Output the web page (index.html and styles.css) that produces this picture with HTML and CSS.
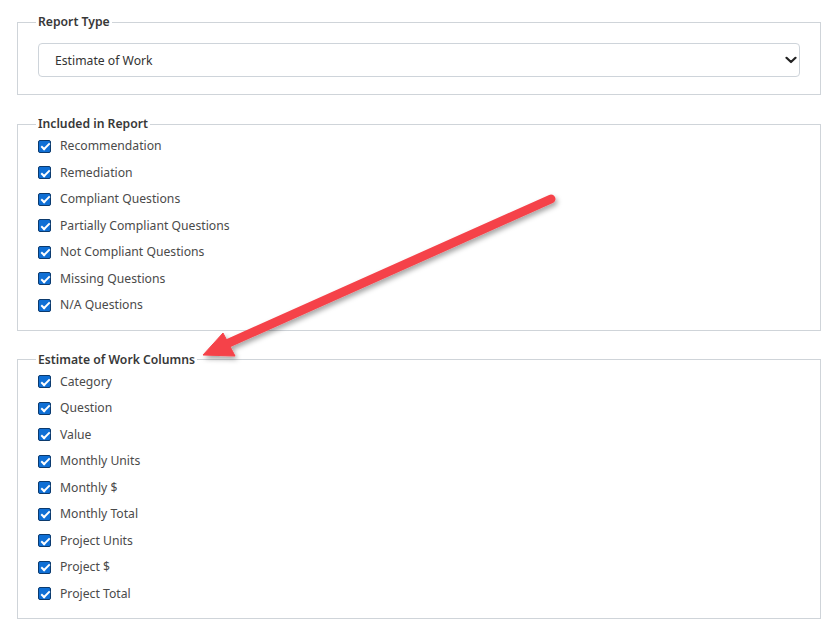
FILE: index.html
```html
<!DOCTYPE html>
<html>
<head>
<meta charset="utf-8">
<link rel="stylesheet" href="styles.css">
</head>
<body>
<div class="page">
  <fieldset class="group group-type">
    <legend>Report Type</legend>
    <div class="select-wrap">
      <select class="select">
        <option>Estimate of Work</option>
      </select>
      <svg class="chev" width="12" height="8" viewBox="0 0 12 8"><path d="M1.5 1.8 L6 6 L10.5 1.8" fill="none" stroke="#222" stroke-width="2.2" stroke-linecap="round" stroke-linejoin="round"/></svg>
    </div>
  </fieldset>

  <fieldset class="group">
    <legend>Included in Report</legend>
    <div class="row"><span class="cb"></span><span class="lbl">Recommendation</span></div>
    <div class="row"><span class="cb"></span><span class="lbl">Remediation</span></div>
    <div class="row"><span class="cb"></span><span class="lbl">Compliant Questions</span></div>
    <div class="row"><span class="cb"></span><span class="lbl">Partially Compliant Questions</span></div>
    <div class="row"><span class="cb"></span><span class="lbl">Not Compliant Questions</span></div>
    <div class="row"><span class="cb"></span><span class="lbl">Missing Questions</span></div>
    <div class="row"><span class="cb"></span><span class="lbl">N/A Questions</span></div>
  </fieldset>

  <fieldset class="group">
    <legend>Estimate of Work Columns</legend>
    <div class="row"><span class="cb"></span><span class="lbl">Category</span></div>
    <div class="row"><span class="cb"></span><span class="lbl">Question</span></div>
    <div class="row"><span class="cb"></span><span class="lbl">Value</span></div>
    <div class="row"><span class="cb"></span><span class="lbl">Monthly Units</span></div>
    <div class="row"><span class="cb"></span><span class="lbl">Monthly $</span></div>
    <div class="row"><span class="cb"></span><span class="lbl">Monthly Total</span></div>
    <div class="row"><span class="cb"></span><span class="lbl">Project Units</span></div>
    <div class="row"><span class="cb"></span><span class="lbl">Project $</span></div>
    <div class="row"><span class="cb"></span><span class="lbl">Project Total</span></div>
  </fieldset>
</div>

<svg class="arrow" width="837" height="632" viewBox="0 0 837 632">
  <defs>
    <filter id="sh" x="-20%" y="-20%" width="140%" height="140%">
      <feDropShadow dx="2" dy="3" stdDeviation="2.5" flood-color="#000" flood-opacity="0.35"/>
    </filter>
  </defs>
  <g filter="url(#sh)" fill="#f5434a" stroke="#f5434a">
    <line x1="551" y1="199" x2="222" y2="346" stroke-width="9" stroke-linecap="round"/>
    <polygon points="203,355 223,333 235,356" stroke-width="1" stroke-linejoin="round"/>
  </g>
</svg>
</body>
</html>
```

FILE: styles.css
```css
html, body {
  margin: 0;
  padding: 0;
  background: #ffffff;
}
body {
  font-family: "Noto Sans", "Open Sans", sans-serif;
  font-size: 12.2px;
  color: #444;
}
.page {
  padding: 13px 16px 0 17px;
  display: flex;
  flex-direction: column;
  gap: 20px;
}
.group {
  margin: 0;
  border: 1px solid #cfd4d9;
  padding: 0 20px 11px 20px;
  min-width: 0;
}
.group-type {
  padding-bottom: 17px;
}
legend {
  padding: 0 2px;
  margin-left: -2px;
  font-weight: 600;
  color: #383838;
  font-size: 12.2px;
  line-height: 18px;
}
.select-wrap {
  position: relative;
  margin-top: 12px;
}
.select {
  display: block;
  width: 100%;
  height: 34px;
  box-sizing: border-box;
  appearance: none;
  -webkit-appearance: none;
  border: 1px solid #ced4da;
  border-radius: 4px;
  background: #fff;
  padding: 0 30px 0 16px;
  font-family: "Noto Sans", "Open Sans", sans-serif;
  font-size: 12.2px;
  color: #333;
}
.chev {
  position: absolute;
  right: 3px;
  top: 13px;
}
.row {
  display: flex;
  align-items: center;
  height: 26.5px;
}
.cb {
  width: 13px;
  height: 13px;
  box-sizing: border-box;
  border: 1px solid #0b3a6e;
  border-radius: 2px;
  background: #0f6fd5;
  position: relative;
  flex: none;
}
.cb::after {
  content: "";
  position: absolute;
  left: 3.5px;
  top: 0.5px;
  width: 3px;
  height: 7px;
  border: solid #fff;
  border-width: 0 2px 2px 0;
  transform: rotate(45deg);
}
.lbl {
  margin-left: 9px;
  color: #4a4a4a;
  line-height: 18px;
}
.arrow {
  position: absolute;
  left: 0;
  top: 0;
  pointer-events: none;
}
```
